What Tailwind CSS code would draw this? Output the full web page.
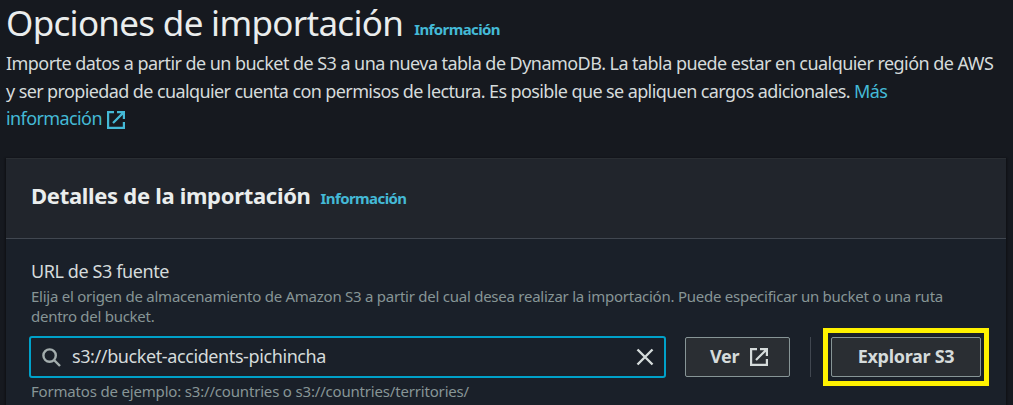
<!DOCTYPE html>
<html lang="es">
<head>
<meta charset="utf-8">
<title>Opciones de importación</title>
<script src="https://cdn.jsdelivr.net/npm/@tailwindcss/browser@4"></script>
</head>
<body class="h-[405px] w-[1013px] overflow-hidden bg-[#16191f] font-['Noto_Sans',sans-serif] text-[#d5dbdb]">
<main class="flex flex-col whitespace-nowrap">
  <header class="h-[158px] pl-[6px]">
    <div class="flex h-[46px] items-baseline gap-[11px]">
      <h1 class="text-[35px] leading-[46px] text-[#eaeded]"><span class="tracking-[-0.7px]">Opciones de importación</span></h1>
      <a class="-translate-y-px text-[15px] font-bold text-[#44b9d6]"><span class="tracking-[-0.6px]">Información</span></a>
    </div>
    <p class="mt-[4px] text-[18px] leading-[27.5px]">
      <span class="tracking-[-0.55px]">Importe datos a partir de un bucket de S3 a una nueva tabla de DynamoDB. La tabla puede estar en cualquier región de AWS</span><br>
      <span class="tracking-[-0.61px]">y ser propiedad de cualquier cuenta con permisos de lectura. Es posible que se apliquen cargos adicionales. <a class="text-[#44b9d6]">Más</a></span><br>
      <a class="inline-flex items-center gap-[5px] text-[#44b9d6]"><span class="tracking-[-0.6px]">información</span>
        <svg class="mt-[2px] h-[18px] w-[18px]" viewBox="0 0 18 18" fill="none" stroke="currentColor" stroke-width="2.2"><path d="M7 1.1H1.1v15.8h15.8v-6M10 1.1h6.9v7M16.9 1.1L6 12"/></svg></a>
    </p>
  </header>
  <section class="ml-[6px] h-[260px] w-[1000px] border-t border-[#2a2e33] bg-[#1a2029] shadow-[0_1px_2px_1px_rgba(0,0,0,0.4)]">
    <div class="flex h-[80px] items-baseline gap-[10px] border-b border-[#414750] bg-[#21252c] pt-[19px] pl-[25px]">
      <h2 class="text-[22px] leading-[34px] font-bold text-[#eaeded]"><span class="tracking-[-0.3px]">Detalles de la importación</span></h2>
      <a class="text-[15px] font-bold text-[#44b9d6]"><span class="tracking-[-0.6px]">Información</span></a>
    </div>
    <div class="pt-[19px] pl-[25px]">
      <label class="block h-[29px] text-[18px] leading-[26px]"><span class="tracking-[-0.4px]">URL de S3 fuente</span></label>
      <p class="-mt-px text-[15px] leading-[20px] text-[#879596]"><span class="tracking-[-0.25px]">Elija el origen de almacenamiento de Amazon S3 a partir del cual desea realizar la importación. Puede especificar un bucket o una ruta</span><br><span class="tracking-[-0.27px]">dentro del bucket.</span></p>
      <div class="mt-[2px] -ml-[9px] flex h-[58px] items-center pl-[7px]">
        <div class="flex h-[42px] w-[637px] items-center rounded-[3px] border-2 border-[#00a1c9] pr-[10px] pl-[11px]">
          <svg class="h-[19px] w-[19px] shrink-0 text-[#a3adad]" viewBox="0 0 19 19" fill="none" stroke="currentColor" stroke-width="2.4"><circle cx="7.6" cy="7.6" r="6.2"/><path d="M12 12l6 6"/></svg>
          <span class="ml-[11px] flex-1 pb-px text-[18px]"><span class="tracking-[-0.4px]">s3://bucket-accidents-pichincha</span></span>
          <svg class="h-[18px] w-[18px] text-[#d5dbdb]" viewBox="0 0 18 18" stroke="currentColor" stroke-width="2.4"><path d="M1.5 1.5l15 15M16.5 1.5l-15 15"/></svg>
        </div>
        <button class="ml-[19px] flex h-10 w-[105px] items-center rounded-[2px] border border-[#879596] bg-[#2a2e33] pl-[24px] text-[18px] font-bold"><span class="w-[40px] pb-[2px] text-left tracking-[-0.3px]">Ver</span>
          <svg class="h-[18px] w-[18px]" viewBox="0 0 18 18" fill="none" stroke="currentColor" stroke-width="2.2"><path d="M7 1.1H1.1v15.8h15.8v-6M10 1.1h6.9v7M16.9 1.1L6 12"/></svg></button>
        <div class="ml-[20px] h-10 w-px bg-[#414750]"></div>
        <div class="ml-[12px] flex h-[58px] w-[166px] items-center justify-center border-[5px] border-[#fff200]">
          <button class="h-10 w-[150px] rounded-[2px] border border-[#879596] bg-[#2a2e33] pb-[2px] text-[18px] leading-[36px] font-bold"><span class="tracking-[-0.3px]">Explorar S3</span></button>
        </div>
      </div>
      <p class="-mt-[5px] text-[15px] leading-[20px] text-[#879596]"><span class="tracking-[-0.18px]">Formatos de ejemplo: s3://countries o s3://countries/territories/</span></p>
    </div>
  </section>
</main>
</body>
</html>
